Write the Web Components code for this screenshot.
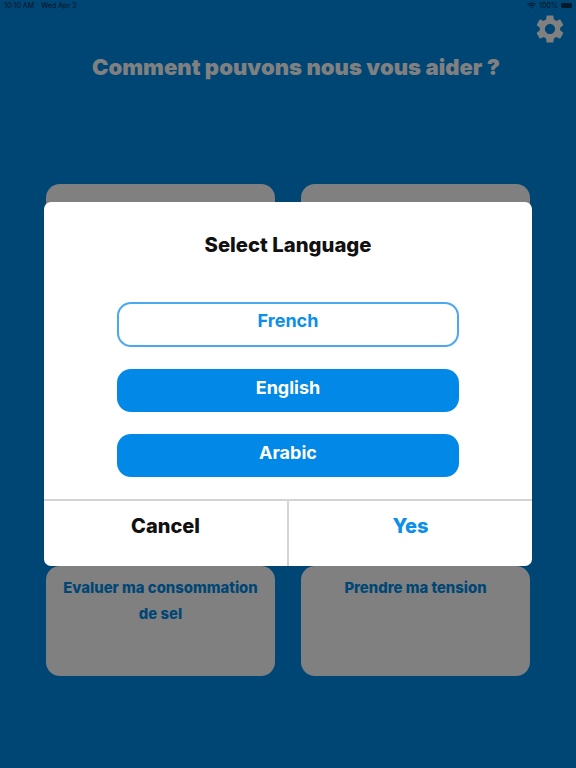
<!DOCTYPE html>
<html lang="fr">
<head>
<meta charset="utf-8">
<title>Select Language</title>
<style>
  html, body { margin: 0; height: 100%; }
  body { background: #004675; font-family: "Inter", "Liberation Sans", sans-serif; overflow: hidden; }
</style>
</head>
<body>
<home-screen>
  <status-bar></status-bar>
  <h-title slot="title">Comment pouvons nous vous aider ?</h-title>
  <menu-card>&nbsp;</menu-card>
  <menu-card>&nbsp;</menu-card>
  <menu-card>Evaluer ma consommation de sel</menu-card>
  <menu-card>Prendre ma tension</menu-card>
</home-screen>
<language-dialog heading="Select Language">
  <lang-button outline>French</lang-button>
  <lang-button>English</lang-button>
  <lang-button>Arabic</lang-button>
</language-dialog>

<script>
class StatusBar extends HTMLElement {
  constructor() {
    super();
    this.attachShadow({ mode: 'open' }).innerHTML = `
      <style>
        :host { display: flex; justify-content: space-between; align-items: center; height: 11px; padding: 0 3px 0 4px; font: 500 7px/11px "Inter", sans-serif; color: #021a2e; }
        .left { display: flex; gap: 7px; }
        .right { display: flex; align-items: center; gap: 3px; }
        .battery { display: block; width: 11px; height: 5px; background: #021a2e; border-radius: 1px; margin-right: 1px; }
        svg { display: block; }
      </style>
      <div class="left"><span>10:10 AM</span><span>Wed Apr 3</span></div>
      <div class="right">
        <svg width="9" height="7" viewBox="0 0 18 14" fill="none" stroke="#021a2e" stroke-width="2.4"><path d="M1 5c4.5-4 11.5-4 16 0M4 8.2c3-2.5 7-2.5 10 0"/><path d="M6.6 10.6c1.5-1 3.3-1 4.8 0L9 13.4z" fill="#021a2e" stroke="none"/></svg>
        <span>100%</span>
        <span class="battery"></span>
      </div>`;
  }
}

class HTitle extends HTMLElement {
  constructor() {
    super();
    this.attachShadow({ mode: 'open' }).innerHTML = `
      <style>
        :host { display: block; padding-left: 16px; text-align: center; color: #808080; font: 900 22.1px/26px "Inter", sans-serif; }
      </style>
      <slot></slot>`;
  }
}

class MenuCard extends HTMLElement {
  constructor() {
    super();
    this.attachShadow({ mode: 'open' }).innerHTML = `
      <style>
        :host { display: block; background: #808080; border-radius: 14px; padding: 9px 12px 0; text-align: center; color: #004675; font: 800 14.85px/26px "Inter", sans-serif; box-sizing: border-box; }
      </style>
      <slot></slot>`;
  }
}

class HomeScreen extends HTMLElement {
  constructor() {
    super();
    this.attachShadow({ mode: 'open' }).innerHTML = `
      <style>
        :host { display: block; height: 768px; box-sizing: border-box; }
        .top { display: flex; justify-content: flex-end; height: 43px; padding: 1px 9px 0 0; box-sizing: border-box; }
        .title { height: 130px; }
        .grid { display: grid; grid-template-columns: 229px 229px; grid-template-rows: 190px 110px; gap: 192px 26px; justify-content: center; }
        svg { display: block; }
      </style>
      <slot name="status"></slot>
      <div class="top">
        <svg width="34" height="34" viewBox="0 0 24 24" fill="#808080"><path d="M19.14 12.94c.04-.3.06-.61.06-.94 0-.32-.02-.64-.07-.94l2.03-1.58c.18-.14.23-.41.12-.61l-1.92-3.32c-.12-.22-.37-.29-.59-.22l-2.39.96c-.5-.38-1.03-.7-1.62-.94l-.36-2.54c-.04-.24-.24-.41-.48-.41h-3.84c-.24 0-.43.17-.47.41l-.36 2.54c-.59.24-1.13.57-1.62.94l-2.39-.96c-.22-.08-.47 0-.59.22L2.74 8.87c-.12.21-.08.47.12.61l2.03 1.58c-.05.3-.09.63-.09.94s.02.64.07.94l-2.03 1.58c-.18.14-.23.41-.12.61l1.92 3.32c.12.22.37.29.59.22l2.39-.96c.5.38 1.03.7 1.62.94l.36 2.54c.05.24.24.41.48.41h3.84c.24 0 .44-.17.47-.41l.36-2.54c.59-.24 1.13-.56 1.62-.94l2.39.96c.22.08.47 0 .59-.22l1.92-3.32c.12-.22.07-.47-.12-.61l-2.01-1.58zM12 15.6c-1.98 0-3.6-1.62-3.6-3.6s1.62-3.6 3.6-3.6 3.6 1.62 3.6 3.6-1.62 3.6-3.6 3.6z"/></svg>
      </div>
      <div class="title"><slot name="title"></slot></div>
      <div class="grid"><slot></slot></div>`;
  }
  connectedCallback() {
    const bar = this.querySelector('status-bar');
    if (bar) bar.slot = 'status';
  }
}

class LangButton extends HTMLElement {
  constructor() {
    super();
    this.attachShadow({ mode: 'open' }).innerHTML = `
      <style>
        :host { display: flex; justify-content: center; box-sizing: border-box; width: 342px; height: 43px; padding-top: 6px; border-radius: 14px; background: #0288e6; color: #fff; font: 700 18px/26px "Inter", sans-serif; }
        :host([outline]) { height: 45px; background: #fff; color: #0b8fea; border: 2px solid #4aa8ee; padding-top: 4px; }
      </style>
      <slot></slot>`;
  }
}

class LanguageDialog extends HTMLElement {
  constructor() {
    super();
    this.attachShadow({ mode: 'open' }).innerHTML = `
      <style>
        :host { position: absolute; left: 44px; top: 202px; width: 488px; height: 364px; background: #fff; border-radius: 7px; display: flex; flex-direction: column; color: #111; }
        h2 { margin: 0; padding-top: 30px; height: 100px; box-sizing: border-box; text-align: center; font: 800 20.3px/26px "Inter", sans-serif; }
        .options { display: flex; flex-direction: column; align-items: center; gap: 22px; height: 197px; box-sizing: border-box; }
        .actions { flex: 1; display: grid; grid-template-columns: 245px 1fr; border-top: 2px solid #d4d4d4; }
        .actions div { display: flex; justify-content: center; padding-top: 12px; font: 800 20px/26px "Inter", sans-serif; }
        .cancel { border-right: 2px solid #d4d4d4; }
        .yes { color: #0b8fea; }
      </style>
      <h2></h2>
      <div class="options"><slot></slot></div>
      <div class="actions">
        <div class="cancel">Cancel</div>
        <div class="yes">Yes</div>
      </div>`;
  }
  connectedCallback() {
    this.shadowRoot.querySelector('h2').textContent = this.getAttribute('heading');
  }
}

customElements.define('status-bar', StatusBar);
customElements.define('h-title', HTitle);
customElements.define('menu-card', MenuCard);
customElements.define('home-screen', HomeScreen);
customElements.define('lang-button', LangButton);
customElements.define('language-dialog', LanguageDialog);
</script>
</body>
</html>
